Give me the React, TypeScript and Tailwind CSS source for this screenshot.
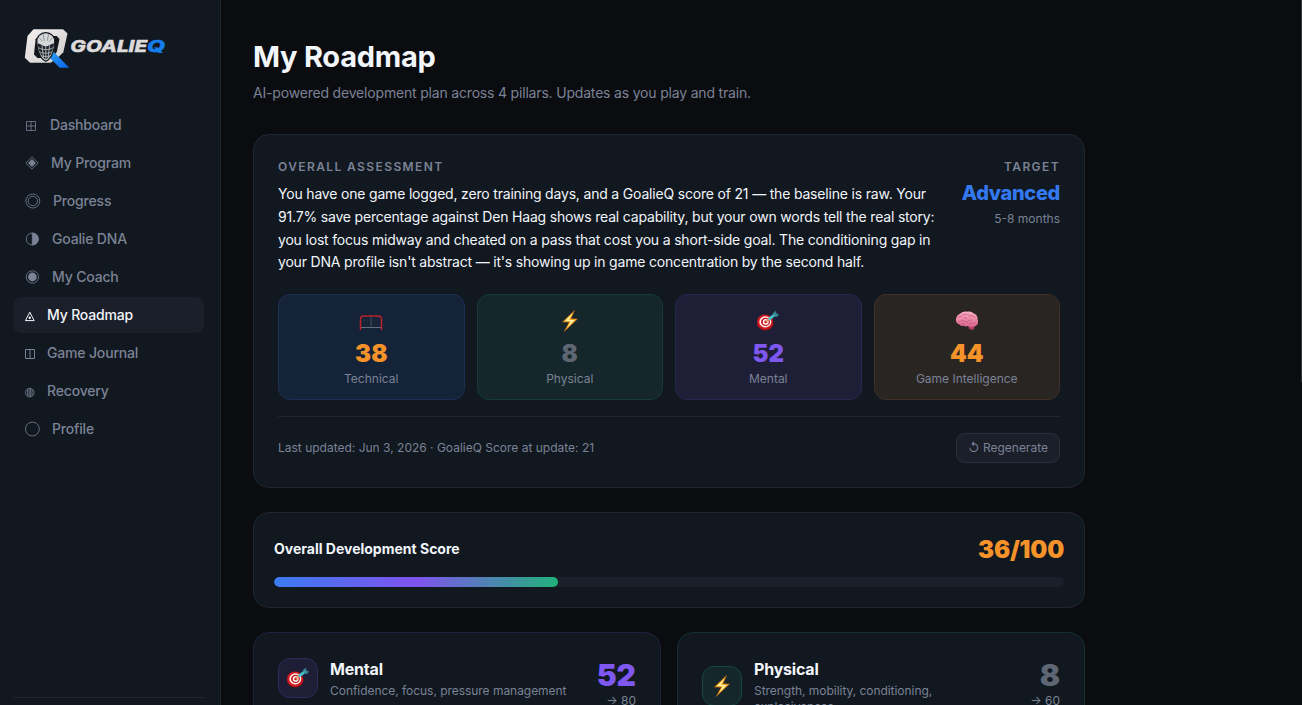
import type { ReactNode } from "react"

const navItems = [
    { label: "Dashboard", icon: "dashboard", gap: "w-[25px]" },
    { label: "My Program", icon: "program", gap: "w-[26px]" },
    { label: "Progress", icon: "progress", gap: "w-[28px]" },
    { label: "Goalie DNA", icon: "dna", gap: "w-[27px]" },
    { label: "My Coach", icon: "coach", gap: "w-[27px]" },
    { label: "My Roadmap", icon: "roadmap", gap: "w-[22px]", active: true },
    { label: "Game Journal", icon: "journal", gap: "w-[22px]" },
    { label: "Recovery", icon: "recovery", gap: "w-[22px]" },
    { label: "Profile", icon: "profile", gap: "w-[27px]" },
]

const stats = [
    { label: "Technical", value: 38, icon: <NetIcon />, box: "bg-[#152338] border-[#1a2f52]", color: "text-[#f5922a]" },
    { label: "Physical", value: 8, icon: <BoltIcon />, box: "bg-[#15272b] border-[#153a38]", color: "text-[#5f6673]" },
    { label: "Mental", value: 52, icon: <TargetIcon />, box: "bg-[#1e1f37] border-[#292650]", color: "text-[#7f57f1]" },
    { label: "Game Intelligence", value: 44, icon: <BrainIcon />, box: "bg-[#292523] border-[#403025]", color: "text-[#f5922a]" },
]

function NavIcon({ name }: { name: string }) {
    const shapes: Record<string, ReactNode> = {
        dashboard: <path d="M1.5 6.5h9v9h-9zM6 6.5v9M1.5 11h9" />,
        program: (
            <>
                <path d="M7 3.8 13.2 10 7 16.2.8 10z" />
                <path d="M7 6 11 10 7 14 3 10z" fill="currentColor" stroke="none" />
            </>
        ),
        progress: (
            <>
                <circle cx="7.8" cy="10" r="7" />
                <circle cx="7.8" cy="10" r="4.7" />
            </>
        ),
        dna: (
            <>
                <circle cx="7.3" cy="10" r="6" />
                <path d="M7.3 4a6 6 0 0 1 0 12z" fill="currentColor" />
            </>
        ),
        coach: (
            <>
                <circle cx="7.4" cy="10" r="6.2" />
                <circle cx="7.4" cy="10" r="4.4" fill="currentColor" stroke="none" />
            </>
        ),
        roadmap: (
            <>
                <path d="M4.8 7.2 9.2 15.6H.4z" strokeWidth="1" />
                <circle cx="4.8" cy="12.8" r="1.2" fill="currentColor" stroke="none" />
            </>
        ),
        journal: <path d="M.5 6.5h9v9h-9zM5 6.5v9" strokeWidth="1" />,
        recovery: (
            <>
                <circle cx="4.8" cy="11.6" r="4.3" />
                <path d="M2.6 8.3v6.6M4.1 7.4v8.4M5.6 7.4v8.4M7.1 8.3v6.6" />
            </>
        ),
        profile: <circle cx="7.4" cy="10" r="6.9" />,
    }

    return (
        <svg width="18" height="20" viewBox="0 0 18 20" fill="none" stroke="currentColor" strokeWidth=".8" className="block">
            {shapes[name]}
        </svg>
    )
}

function NetIcon() {
    return (
        <svg width="24" height="20" viewBox="0 0 24 20" fill="none" className="mt-1">
            <path d="M1.8 14.5h20.4" stroke="#687080" />
            <path d="M12 3.5v11" stroke="#4a5362" />
            <path d="M5.4 4v10M8.7 4v10M15.3 4v10M18.6 4v10M2 7.3h20M2 10.8h20" stroke="#253042" strokeWidth=".4" />
            <path d="M1.5 17V6.3Q1.5 3 4.8 3h14.4q3.3 0 3.3 3.3V17" stroke="#b9222d" strokeWidth="1.5" />
        </svg>
    )
}

function BoltIcon() {
    return (
        <svg width="24" height="24" viewBox="0 0 24 24">
            <path d="M16.6 1.3 4.5 13l6.7.2-5 9.3L19.5 10l-6.6-.2z" fill="#ffb629" stroke="#a85517" strokeWidth=".6" strokeLinejoin="round" />
            <path d="M14.8 4.2 7 12l5.9.1-3.7 6.4 7.4-7.5-6-.1z" fill="#fff3ad" />
        </svg>
    )
}

function TargetIcon() {
    return (
        <svg width="24" height="24" viewBox="0 0 24 24">
            <ellipse cx="9.3" cy="14" rx="8.3" ry="7.6" fill="#8e1016" />
            <ellipse cx="9" cy="12.9" rx="7.9" ry="7.5" fill="#ce1920" />
            <ellipse cx="9.3" cy="12.9" rx="6" ry="5.6" fill="#fff0ed" />
            <ellipse cx="9.5" cy="12.9" rx="4.5" ry="4.2" fill="#c9171f" />
            <ellipse cx="9.7" cy="12.9" rx="3" ry="2.8" fill="#fff0ed" />
            <ellipse cx="9.8" cy="12.9" rx="1.5" ry="1.4" fill="#c9171f" />
            <path d="m10 13 3.2-3" stroke="#dba057" strokeWidth="1.3" />
            <path d="m12.8 10.4 5.4-4.2" stroke="#46c4cd" strokeWidth="2.8" />
            <path d="m17 7 .2-2.7 2.3-2 .3 2.3M17.6 7l2.7.7 2.5-1.9-2.4-.7" fill="#318f98" stroke="#368f99" strokeWidth=".6" />
            <path d="m17.5 6.6 3-2.3" stroke="#67ced4" strokeWidth=".8" />
        </svg>
    )
}

function BrainIcon() {
    return (
        <svg width="24" height="24" viewBox="0 0 24 24" fill="none">
            <defs>
                <linearGradient id="brain" x1="0" y1="0" x2="0" y2="1">
                    <stop stopColor="#f9adc3" />
                    <stop offset="1" stopColor="#d9618b" />
                </linearGradient>
            </defs>
            <path d="M13.5 17c-.2 2.4 1 4 3.6 3.8 1.8-.2 2.6-1.4 2.2-2.6z" fill="#b23e66" />
            <path d="M1.2 12.5C.3 9 2.2 6 5 4.7c2.3-2.2 5.2-2.6 7.6-2 2.4-.6 4.5.2 5.8 1.6 3 1 4.7 3.7 4.2 6.3 1.2 2.8.1 5.7-2.4 6.7-2.5 1.6-5.6 1-7.2-.2-1.6.7-3.3.4-4.3-.3-2.1.5-3.8-.4-4.4-1.5-1.6-.2-2.9-1.4-3.1-2.8z" fill="url(#brain)" />
            <path d="M3 8.5c1.6-1.8 3-.4 4.2-2 1.5-1.9 3-.4 4.6-1.5M3 12.3c2.5 1.5 3.4-1.6 5.2-1.2 1.8.4 1.6 2.6 4 1.7 1.8-.7 2.6-2.4 4.8-1.7M12.6 5.3c.7 2 2.3 1.7 3.3 1.4 1.6-.4 2.2 1.5 4 1.2M6 14.6c2 .4 2.7-.7 4 .2M14 14.7c2-1.8 4.2 1 6.4-1.3M9 8.5c1.5 0 1.5 1.2 3 1.1" stroke="#c5557f" strokeWidth=".8" />
        </svg>
    )
}

function Logo() {
    return (
        <svg width="142" height="42" viewBox="0 0 142 42" className="block">
            <defs>
                <linearGradient id="shell" x1="0" y1="0" x2="1" y2="1">
                    <stop stopColor="#f3efed" />
                    <stop offset="1" stopColor="#cfcccd" />
                </linearGradient>
                <linearGradient id="stick" x1="0" y1="0" x2="1" y2="1">
                    <stop stopColor="#2fa0fa" />
                    <stop offset="1" stopColor="#0862e5" />
                </linearGradient>
            </defs>
            <path d="M9.5 2.2H39l4.5 4.2-4.2 18.8-4.6 4.6-8 6H6L.8 30.8 3.5 9z" fill="url(#shell)" />
            <path d="M14.5 9h18.2l2.8 3-2.7 13-5 6H13.5L10 27.5l1.6-15.3z" fill="#12171d" />
            <path d="m29.3 24.5 16 16.3h-9.5l-9.5-9.4z" fill="url(#stick)" />
            <path d="M21.8 5.6c5.4 0 9.3 4 9 9.6-.2 8.2-3.6 16.6-9 19.1-5.4-2.5-8.8-10.9-9-19.1-.3-5.6 3.6-9.6 9-9.6z" fill="#d6d7d8" stroke="#12171d" strokeWidth="1.2" />
            <path d="M13.6 16.2c3 .9 5.5 3 8.2 3s5.2-2.1 8.2-3c-.6 6.6-3.4 13.7-8.2 16.2-4.8-2.5-7.6-9.6-8.2-16.2z" fill="#20262c" />
            <path d="M14.2 20.6c2.8 1.5 4.8 2 7.6 2s4.8-.5 7.6-2M15.6 24.8c2.2 1 3.8 1.4 6.2 1.4s4-.4 6.2-1.4M17.6 28.8c2.6.9 5.8.9 8.4 0M18 18.6l1.5 12M25.6 18.6l-1.5 12M21.8 19v13" fill="none" stroke="#c3c6c9" strokeWidth=".8" />
            <path d="M19 6.8l1.3 7M24.6 6.8l-1.3 7M15.5 11l3 3.5M28.1 11l-3 3.5" fill="none" stroke="#7d8287" strokeWidth=".8" />
            <g fontFamily="Inter, sans-serif" fontSize="16" fontWeight="800" fontStyle="italic">
                <text x="46.3" y="25" fill="#dcdadb" stroke="#dcdadb" strokeWidth=".4" textLength="77" lengthAdjust="spacingAndGlyphs">GOALIE</text>
                <text x="123" y="25" fill="#147eee" stroke="#147eee" strokeWidth=".4" textLength="18" lengthAdjust="spacingAndGlyphs">Q</text>
            </g>
        </svg>
    )
}

function PillarCard({ title, desc, score, target, icon, border, box, color }: {
    title: string
    desc: string
    score: number
    target: number
    icon: ReactNode
    border: string
    box: string
    color: string
}) {
    return (
        <div className={`flex h-[220px] items-start rounded-2xl border bg-[#111820] p-6 ${border}`}>
            <div className="flex flex-1 items-center gap-3">
                <div className={`flex size-10 shrink-0 items-center justify-center rounded-xl border ${box}`}>{icon}</div>
                <div className="w-[240px]">
                    <h3 className="text-base leading-6 font-bold tracking-[-0.2px] text-[#f2f5fa]">{title}</h3>
                    <p className="text-xs leading-4 tracking-[-0.04px] mt-0.5 text-[#7b8295]">{desc}</p>
                </div>
            </div>
            <div className="text-right">
                <div className={`pt-px text-[30px] leading-[35px] font-black ${color}`}>{score}</div>
                <div className="text-xs leading-4 text-[#7b8295]">→ {target}</div>
            </div>
        </div>
    )
}

export default function App() {
    return (
        <div className="flex h-[705px] overflow-hidden bg-[#0a0c10] font-['Inter',sans-serif] text-[#f2f5fa]">
            <aside className="flex w-[221px] shrink-0 flex-col border-r border-[#20252f] bg-[#111820] pl-[13px] pr-4">
                <div className="pt-[27px] pl-[11px]">
                    <Logo />
                </div>
                <nav className="mt-[38px] flex flex-1 flex-col gap-0.5">
                    {navItems.map((item) => (
                        <a
                            key={item.label}
                            className={`flex h-9 items-center rounded-lg pl-3 text-sm font-medium tracking-[-0.17px] ${item.active ? "bg-[#1a1f2a] text-[#f2f5fa]" : "text-[#7b8295]"}`}
                        >
                            <span className={`shrink-0 ${item.gap}`}><NavIcon name={item.icon} /></span>
                            {item.label}
                        </a>
                    ))}
                </nav>
                <div className="h-2 border-t border-[#20252f]" />
            </aside>

            <main className="flex-1 pt-[37px] pl-8">
                <div className="w-[832px]">
                    <h1 className="text-[29px] leading-10 font-bold tracking-[-0.25px]">My Roadmap</h1>
                    <p className="mt-1.5 text-sm tracking-[-0.185px] text-[#7b8295]">AI-powered development plan across 4 pillars. Updates as you play and train.</p>

                    <section className="mt-[31px] h-[354px] rounded-2xl border border-[#20252f] bg-[#111820] p-6">
                        <div className="flex justify-between">
                            <div className="w-[660px]">
                                <h2 className="text-xs leading-4 font-semibold tracking-[1.4px] text-[#7b8295]">OVERALL ASSESSMENT</h2>
                                <p className="mt-2 text-sm leading-[22.75px] tracking-[-0.185px]">
                                    You have one game logged, zero training days, and a GoalieQ score of 21 — the baseline is raw. Your 91.7% save percentage against Den Haag shows real capability, but your own words tell the real story: you lost focus midway and cheated on a pass that cost you a short-side goal. The conditioning gap in your DNA profile isn't abstract — it's showing up in game concentration by the second half.
                                </p>
                            </div>
                            <div className="text-right">
                                <div className="text-xs leading-4 font-semibold tracking-[1.4px] text-[#7b8295]">TARGET</div>
                                <div className="mt-1 text-xl leading-7 font-extrabold tracking-[-0.35px] text-[#3478f0]">Advanced</div>
                                <div className="mt-1 text-xs leading-4 text-[#7b8295]">5-8 months</div>
                            </div>
                        </div>

                        <div className="mt-5 grid grid-cols-4 gap-3">
                            {stats.map((stat) => (
                                <div key={stat.label} className={`flex h-[106px] flex-col items-center rounded-xl border pt-3 ${stat.box}`}>
                                    <div className="flex h-7 items-center">{stat.icon}</div>
                                    <div className={`mt-[3px] text-2xl leading-8 font-black ${stat.color}`}>{stat.value}</div>
                                    <div className="mt-px text-xs leading-4 text-[#7b8295]">{stat.label}</div>
                                </div>
                            ))}
                        </div>

                        <div className="mt-4 flex items-center justify-between border-t border-[#20252f] pt-4">
                            <span className="text-xs text-[#7b8295]">Last updated: Jun 3, 2026 · GoalieQ Score at update: 21</span>
                            <button className="h-[30px] w-[104px] rounded-lg border border-[#282d38] bg-[#1a1f2a] text-xs text-[#7b8295]">
                                ↺ Regenerate
                            </button>
                        </div>
                    </section>

                    <section className="mt-6 h-24 rounded-2xl border border-[#20252f] bg-[#111820] p-5">
                        <div className="flex h-8 items-center justify-between">
                            <h2 className="text-sm font-bold">Overall Development Score</h2>
                            <span className="pt-0.5 text-2xl font-black tracking-[-0.2px] text-[#f5922a]">36/100</span>
                        </div>
                        <div className="mt-3 h-2.5 overflow-hidden rounded-full bg-[#1a1f2a]">
                            <div className="h-full w-[36%] rounded-full bg-linear-to-r/srgb from-[#3b7bf0] via-[#8053ee] to-[#20b27b]" />
                        </div>
                    </section>

                    <section className="mt-6 grid grid-cols-2 gap-4">
                        <PillarCard
                            title="Mental"
                            desc="Confidence, focus, pressure management"
                            score={52}
                            target={80}
                            icon={<TargetIcon />}
                            border="border-[#211f3d]"
                            box="bg-[#1e1f37] border-[#30295d]"
                            color="text-[#7f57f1]"
                        />
                        <PillarCard
                            title="Physical"
                            desc="Strength, mobility, conditioning, explosiveness"
                            score={8}
                            target={60}
                            icon={<BoltIcon />}
                            border="border-[#143030]"
                            box="bg-[#15272b] border-[#17483f]"
                            color="text-[#5f6673]"
                        />
                    </section>
                </div>
            </main>
            <div className="h-[382px] w-px bg-[#303236]" />
        </div>
    )
}
